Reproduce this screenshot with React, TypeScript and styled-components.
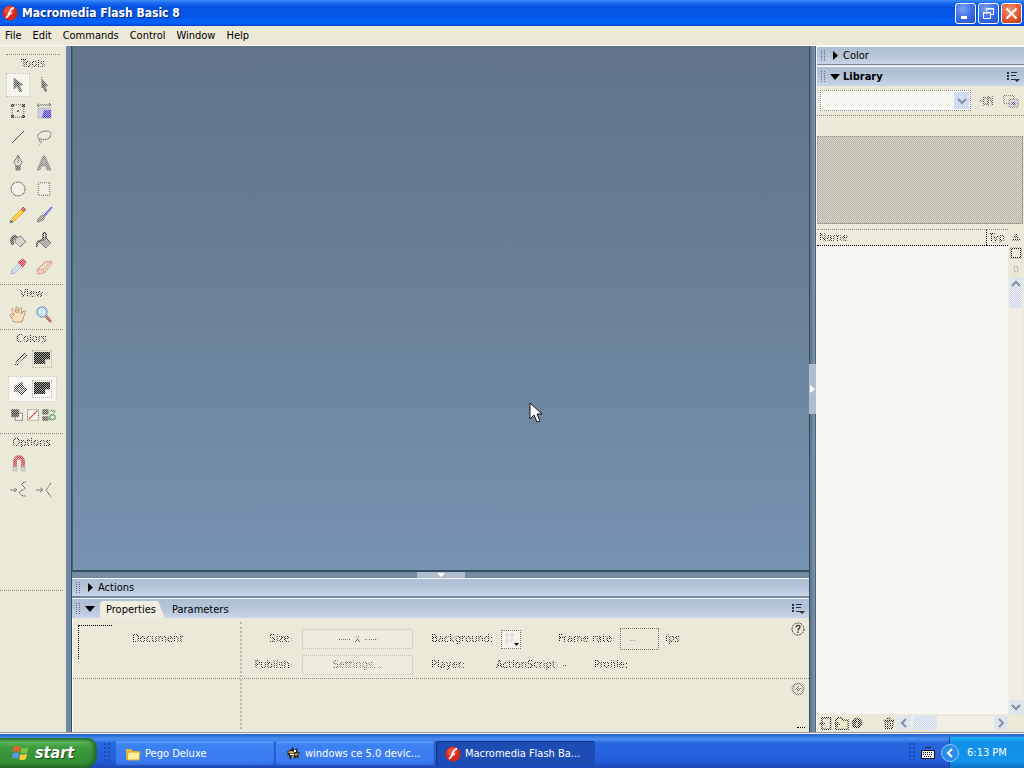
import React from "react";
import styled, { createGlobalStyle, css } from "styled-components";

const checkerMask = css`
  mask-image: conic-gradient(#000 25%, transparent 0 50%, #000 0 75%, transparent 0);
  mask-size: 2px 2px;
`;

const softMask = css`
  mask-image: conic-gradient(#000 25%, rgb(0 0 0 / 40%) 0 50%, #000 0 75%, rgb(0 0 0 / 40%) 0);
  mask-size: 2px 2px;
`;

const checker = (a: string, b: string) =>
  `conic-gradient(${a} 25%, ${b} 0 50%, ${a} 0 75%, ${b} 0) 0 0 / 2px 2px`;

const GlobalStyle = createGlobalStyle`
  * { box-sizing: border-box; }
  body {
    margin: 0;
    background: #ebe9d8;
    color: #000;
    font: 11px/14px "DejaVu Sans Condensed", "Open Sans", sans-serif;
  }
  button, input, select {
    font: inherit;
    color: inherit;
    margin: 0;
    padding: 0;
    border: 0;
    background: none;
    border-radius: 0;
    opacity: 1;
  }
  svg { display: block; flex: none; }
`;

const Desktop = styled.div`
  display: flex;
  flex-direction: column;
  height: 100vh;
  min-height: 640px;
  overflow: hidden;
`;

/* ---------- title and menu ---------- */

const TitleBar = styled.header`
  display: flex;
  align-items: center;
  gap: 4px;
  flex: none;
  height: 26px;
  padding: 0 2px;
  background: linear-gradient(#3c8cf8 0, #1a6af0 3px, #0553e0 7px, #0556e8 16px, #0264fe 22px, #0458ea 24px, #0440c0 26px);
`;

const WindowTitle = styled.h1`
  flex: 1;
  margin: 0;
  color: #fff;
  font: bold 12px/16px "DejaVu Sans Condensed", sans-serif;
  text-shadow: 1px 1px 1px #0a2a80;
`;

const CaptionButton = styled.button<{ $close?: boolean }>`
  display: grid;
  place-items: center;
  width: 21px;
  height: 21px;
  margin-left: -2px;
  border: 1px solid #fff;
  border-radius: 3px;
  background: ${(p) =>
    p.$close
      ? "radial-gradient(circle at 40% 30%, #f09478, #e25530 60%, #b93614)"
      : "radial-gradient(circle at 35% 25%, #7ba2f4, #3a6ae8 55%, #2350c8)"};
`;

const MenuBar = styled.nav`
  display: flex;
  align-items: center;
  gap: 11px;
  flex: none;
  height: 20px;
  padding: 0 5px;
  border-bottom: 1px solid #fbfaf4;
  background: #ede9d9;
`;

const MenuItem = styled.button`
  line-height: 16px;
`;

/* ---------- workspace ---------- */

const Workspace = styled.div`
  display: flex;
  flex: 1;
  min-height: 0;
  background: #7189a3;
  border-bottom: 1px solid #9c9a98;
`;

const Toolbox = styled.aside`
  width: 66px;
  flex: none;
  padding: 8px 3px 0 0;
  background: #ebe9d8;
`;

const ToolSection = styled.section<{ $height: number; $inset?: boolean }>`
  height: ${(p) => p.$height}px;
  ${(p) => p.$inset && "margin: 0 3px 0 6px;"}
  border-top: 1px dotted #8c8b80;
`;

const Dithered = styled.span`
  ${checkerMask}
`;

const SectionTitle = styled.h2`
  margin: 0;
  padding-top: 1px;
  font: inherit;
  line-height: 16px;
  text-align: center;
  ${checkerMask}
`;

const ToolGrid = styled.div<{ $inset?: boolean }>`
  display: grid;
  grid-template-columns: 26px 26px;
  grid-auto-rows: 26px;
  margin-left: ${(p) => (p.$inset ? "-1px" : "5px")};
`;

const ToolButton = styled.button<{ $on?: boolean }>`
  display: grid;
  place-items: center;
  width: 24px;
  height: 24px;
  margin: 1px;
  ${(p) => p.$on && "background: #f6f5ee; border: 1px dotted #c4c2b8;"}
  svg { ${softMask} }
`;

const SwatchButton = styled.button<{ $on?: boolean }>`
  display: flex;
  align-items: center;
  gap: 2px;
  width: 47px;
  height: 24px;
  margin: 0 0 6px 9px;
  padding-left: 3px;
  ${(p) => p.$on && "background: #f8f7f1; outline: 1px dotted #d4d2c8;"}
`;

const Swatch = styled.span`
  display: block;
  width: 20px;
  height: 18px;
  border: 1px dotted #b5b3a8;
  padding: 1px;
  i {
    display: block;
    height: 12px;
    background: ${checker("#111", "#a8a69b")};
    clip-path: polygon(0 0, 100% 0, 100% 60%, 70% 60%, 70% 100%, 0 100%);
  }
`;

const SmallTools = styled.div`
  display: flex;
  margin-left: 9px;
  svg { ${softMask} }
`;

const Center = styled.div`
  display: flex;
  flex-direction: column;
  flex: 1;
  min-width: 0;
  margin-left: 5px;
  border-left: 1px solid #344d60;
`;

const Stage = styled.main`
  position: relative;
  flex: 1;
  min-height: 0;
  border-left: 1px solid #4c6379;
  border-bottom: 2px solid #344d60;
  background: linear-gradient(#61748a, #6a8097 45%, #7693b0);
`;

const Cursor = styled.svg`
  position: absolute;
  left: 62%;
  top: 68%;
`;

const Gutter = styled.div<{ $vertical?: boolean }>`
  display: flex;
  align-items: center;
  justify-content: center;
  flex: none;
  ${(p) =>
    p.$vertical
      ? "width: 7px; border-left: 1px solid #344d60; border-right: 1px solid #4d6378;"
      : "height: 6px;"}
  background: ${(p) => (p.$vertical ? "linear-gradient(90deg, #5c7389, #7d95ae)" : "#748ba2")};
`;

const Handle = styled.button<{ $vertical?: boolean }>`
  display: grid;
  place-items: center;
  flex: none;
  width: ${(p) => (p.$vertical ? 7 : 48)}px;
  height: ${(p) => (p.$vertical ? 50 : 6)}px;
  background: #b0bdcf;
`;

const PanelHeader = styled.header<{ $bold?: boolean }>`
  display: flex;
  align-items: center;
  flex: none;
  height: 19px;
  padding: 0 4px 0 4px;
  border-top: 1px solid #f4f7fb;
  border-bottom: 1px solid #7487a0;
  background: linear-gradient(#adbfd3, #b6c5d9 50%, #c9d5ea);
  font-weight: ${(p) => (p.$bold ? "bold" : "normal")};
`;

const Grip = styled.span`
  width: 4px;
  height: 11px;
  margin-right: 5px;
  background: conic-gradient(at 1px 1px, transparent 75%, #5d6c82 0) 0 0 / 3px 2px;
`;

const PanelTitle = styled.button`
  display: flex;
  align-items: center;
  gap: 3px;
  font-weight: inherit;
`;

const Spacer = styled.span`
  flex: 1;
`;

const TabHeader = styled(PanelHeader)`
  height: 20px;
  margin-top: 1px;
  border-bottom: 0;
`;

const Tab = styled.button<{ $active?: boolean }>`
  align-self: flex-end;
  height: 17px;
  margin-left: 5px;
  padding: 1px ${(p) => (p.$active ? 9 : 2)}px 0 ${(p) => (p.$active ? 6 : 2)}px;
  ${(p) =>
    p.$active &&
    "background: #efeddf; border-radius: 4px 0 0 0; clip-path: polygon(0 0, calc(100% - 7px) 0, 100% 100%, 0 100%);"}
`;

const Inspector = styled.section`
  display: flex;
  flex: none;
  height: 114px;
  background: #ebe9d8;
  border-left: 1px solid #fff;
`;

const DocumentCell = styled.div`
  width: 169px;
  flex: none;
  margin-top: 4px;
  margin-bottom: 3px;
  border-right: 2px dotted #bab8ad;
`;

const CellTop = styled.div`
  display: flex;
  height: 57px;
  padding: 3px 0 0 5px;
  border-bottom: 1px dotted #8b897f;
`;

const Preview = styled.div`
  width: 34px;
  height: 34px;
  margin-right: 20px;
  border-top: 1px dotted #000;
  border-left: 1px dotted #000;
`;

const DocumentName = styled.span`
  padding-top: 7px;
  ${checkerMask}
`;

const FormCell = styled.div`
  display: flex;
  flex-direction: column;
  flex: 1;
`;

const FormTop = styled.div`
  display: flex;
  height: 61px;
  border-bottom: 1px dotted #8b897f;
`;

const FormRows = styled.form`
  display: flex;
  flex-direction: column;
  flex: 1;
  padding-top: 9px;
  gap: 2px;
`;

const FormRow = styled.div`
  display: flex;
  align-items: center;
  height: 24px;
`;

const Label = styled.label<{ $width?: number; $right?: boolean }>`
  ${(p) => p.$width && `width: ${p.$width}px;`}
  ${(p) => p.$right && "text-align: right;"}
  flex: none;
  white-space: nowrap;
  ${checkerMask}
`;

const FormButton = styled.button`
  width: 111px;
  height: 20px;
  margin: 0 18px 0 9px;
  border: 1px dotted #bdbbaf;
  border-radius: 2px;
  background: ${checker("#f1efe2", "#ebe9d8")};
  color: #55544c;
`;

const ColorWell = styled.button`
  width: 20px;
  height: 19px;
  margin-right: 37px;
  border: 1px dotted #77756b;
  background: #f5f4ec;
`;

const RateInput = styled.input`
  width: 39px;
  height: 22px;
  margin-right: 6px;
  padding-left: 8px;
  border: 1px dotted #77756b;
  color: #bbb;
`;

const SideIcons = styled.div`
  display: flex;
  flex-direction: column;
  align-items: flex-end;
  padding: 4px 4px 0 0;
`;

const FormBottom = styled.div`
  display: flex;
  flex: 1;
  flex-direction: column;
  align-items: flex-end;
  justify-content: space-between;
  padding: 3px 4px 4px;
`;

const Dots = styled.span`
  width: 8px;
  border-top: 1px dotted #000;
`;

/* ---------- library ---------- */

const RightDock = styled.aside`
  display: flex;
  flex-direction: column;
  width: 208px;
  flex: none;
  border-left: 1px solid #f4f6f8;
  background: #ebe9d8;
`;

const LibraryBar = styled.div`
  display: flex;
  align-items: center;
  flex: none;
  gap: 5px;
  height: 30px;
  padding: 0 3px 0 3px;
  border-bottom: 1px dotted #8b897f;
`;

const LibrarySelect = styled.div`
  flex: 1;
  display: flex;
  height: 21px;
  border: 1px dotted #8b897f;
  background: ${checker("#fff", "#f2f1e8")};
  select {
    flex: 1;
    appearance: none;
  }
  span {
    display: grid;
    place-items: center;
    width: 15px;
    margin: 1px;
    background: ${checker("#c6d4f4", "#dde3f2")};
  }
`;

const IconButton = styled.button`
  display: grid;
  place-items: center;
  width: 20px;
  height: 20px;
  svg { ${checkerMask} }
`;

const LibraryPreview = styled.div`
  flex: none;
  height: 88px;
  margin: 20px 1px 5px 0;
  border: 1px dotted #8b897f;
  background: ${checker("#b9b8ad", "#d6d4c6")};
`;

const ListArea = styled.div`
  display: flex;
  flex: 1;
  min-height: 0;
  padding-right: 1px;
`;

const ListBody = styled.div`
  flex: 1;
  background: ${checker("#fff", "#f1f0e4")};
`;

const ListTable = styled.table`
  width: 100%;
  border-collapse: collapse;
  table-layout: fixed;
  background: #eeecdd;
  th {
    height: 16px;
    padding: 0 2px;
    border-top: 1px dotted #8b897f;
    border-bottom: 1px dotted #000;
    font-weight: normal;
    line-height: 14px;
    text-align: left;
    white-space: nowrap;
  }
  th + th {
    width: 22px;
    border-left: 1px dotted #000;
  }
`;

const ListRail = styled.div`
  display: flex;
  flex-direction: column;
  align-items: center;
  width: 15px;
  flex: none;
  background: ${checker("#f5f4ec", "#ebe9dc")};
`;

const RailIcon = styled.button<{ $height: number }>`
  display: grid;
  place-items: center;
  width: 15px;
  height: ${(p) => p.$height}px;
  background: #ebe9d8;
  svg { ${checkerMask} }
`;

const ScrollButton = styled.button`
  display: grid;
  place-items: center;
  flex: none;
  width: 14px;
  height: 14px;
  background: ${checker("#d0dbf0", "#eceded")};
`;

const Thumb = styled.span<{ $w: number; $h: number }>`
  width: ${(p) => p.$w}px;
  height: ${(p) => p.$h}px;
  background: ${checker("#ccd7f4", "#ecedf2")};
`;

const LibraryFooter = styled.footer`
  display: flex;
  align-items: center;
  flex: none;
  height: 18px;
  padding-right: 16px;
`;

const FooterButton = styled.button`
  display: grid;
  place-items: center;
  width: 16px;
  height: 16px;
  svg { ${checkerMask} }
`;

const HScroll = styled.div`
  display: flex;
  flex: 1;
  align-items: center;
  gap: 2px;
  background: ${checker("#f8f7f1", "#ebe9dc")};
`;

/* ---------- taskbar ---------- */

const Taskbar = styled.footer`
  display: flex;
  align-items: stretch;
  flex: none;
  height: 35px;
  padding-top: 4px;
  border-top: 1px solid #f2f4fa;
  background: linear-gradient(#2360cc 0, #4a90f0 5px, #2866e0 9px, #245edc 26px, #1c48b8 34px);
  color: #fff;
`;

const StartButton = styled.button`
  display: flex;
  align-items: center;
  gap: 5px;
  width: 97px;
  padding: 0 0 0 12px;
  border-radius: 0 10px 12px 0;
  background: linear-gradient(#2f7d30, #58b458 4px, #3c9a3c 10px, #368f36 24px, #246e26);
  box-shadow: inset -3px 0 4px #1f6423;
  font: italic bold 16px/24px "DejaVu Sans Condensed", sans-serif;
  text-shadow: 1px 1px 1px #1a4a1c;
`;

const TaskGrip = styled.span`
  width: 6px;
  height: 20px;
  margin: 5px 6px 0 7px;
  background: conic-gradient(at 2px 2px, transparent 75%, #1c4ab4 0) 0 0 / 4px 4px;
`;

const Task = styled.button<{ $active?: boolean }>`
  display: flex;
  align-items: center;
  gap: 4px;
  width: 159px;
  height: 25px;
  margin: 3px 1px 0 0;
  padding-left: 9px;
  border-radius: 2px;
  white-space: nowrap;
  background: ${(p) =>
    p.$active ? "#1c4cb4" : "linear-gradient(#5c9cff, #3c81f3 4px, #3a7cf0 20px, #2f68d8)"};
  box-shadow: ${(p) => (p.$active ? "inset 1px 1px 1px #10347c" : "inset -1px -1px 1px #2355c0")};
`;

const Tray = styled.div`
  display: flex;
  align-items: center;
  width: 75px;
  margin-top: -1px;
  border-left: 1px solid #123c98;
  background: linear-gradient(#18b0f4, #1290e8 6px, #1194ec 24px, #0f70c8);
`;

const TrayToggle = styled.button`
  width: 18px;
  height: 18px;
  margin-left: -9px;
  margin-right: 8px;
`;

/* ---------- drawings ---------- */

const Icon = ({ size = 18, children }: { size?: number; children: React.ReactNode }) => (
  <svg width={size} height={size} viewBox="0 0 18 18" fill="none" stroke="#555" aria-hidden="true">
    {children}
  </svg>
);

const FlashLogo = () => (
  <svg width="16" height="16" viewBox="0 0 16 16" aria-hidden="true">
    <circle cx="8" cy="8" r="7.6" fill="#d8281c" />
    <circle cx="7" cy="6" r="4.6" fill="#f06a50" opacity=".6" />
    <path d="M12 3c-3 0-3.600 2-4.300 4.200C7 9.800 6 12 3.800 12.600M6 8.300h4" fill="none" stroke="#fff" strokeWidth="1.800" />
  </svg>
);

const Arrow = ({ down }: { down?: boolean }) => (
  <svg width="10" height="10" viewBox="0 0 10 10" aria-hidden="true">
    <path d={down ? "M0 2h10L5 8z" : "M3 0v9l5-4.500z"} />
  </svg>
);

const OptionsIcon = () => (
  <svg width="13" height="12" viewBox="0 0 13 12" fill="#26313f" aria-hidden="true">
    <path d="M0 1h2v2H0zM0 4h2v2H0zM0 7h2v2H0zM4 1h6v1H4zM4 4h5v1H4zM4 8h5v1H4zM7 8h6l-3 3z" />
  </svg>
);

const Chevron = ({ turn = 0 }: { turn?: number }) => (
  <svg width="10" height="10" viewBox="0 0 10 10" fill="none" stroke="#8290a4" strokeWidth="2" aria-hidden="true">
    <path d="M1 3l4 4 4-4" transform={`rotate(${turn} 5 5)`} />
  </svg>
);

const tools: [string, React.ReactNode][] = [
  ["Selection", <path d="M5 2v11l3-3 3 6 2-1-3-6h4z" fill="#555" stroke="#777" />],
  ["Subselection", <><path d="M7 1v11" strokeDasharray="1 1" stroke="#222" /><path d="M7 3l6 7H10l2 5-2 1-2-5-1 1z" fill="#555" stroke="#777" strokeWidth=".5" /></>],
  ["Free transform", <><path d="M3 3h12v12H3z" strokeDasharray="1 1" stroke="#222" /><path d="M2 2h3v3H2zM13 2h3v3h-3zM2 13h3v3H2zM13 13h3v3h-3zM8 8h2v2H8z" fill="#333" stroke="none" /></>],
  ["Fill transform", <><path d="M3 6h13v10H3z" fill="#c4bfe8" stroke="#aaa" /><path d="M9 8h7v8H7z" fill="#5040e0" stroke="none" /><path d="M2 3h14M4 1L2 3l2 2M14 1l2 2-2 2" /></>],
  ["Line", <path d="M3 15L15 3" />],
  ["Lasso", <path d="M5 11C1 10 2 5 8 3.500S17 4 15.500 8 9 12 5 11zm0 0c-2 1-1 3 1 2s0 3-2 4" />],
  ["Pen", <><path d="M9 1l4 7-2 4H7L5 8z" fill="#ddd" /><path d="M9 2v7M7 12h4v4H7z" fill="#666" /></>],
  ["Text", <path d="M2 16L8 2h2l6 14h-4l-1.500-4h-4L5 16zM7.500 9h3L9 5z" fill="#888" stroke="#777" strokeWidth=".7" />],
  ["Oval", <circle cx="9" cy="9" r="7" fill="#f6f5ee" />],
  ["Rectangle", <path d="M3 3h12v12H3z" fill="#f3f2ea" strokeDasharray="1 1" stroke="#333" />],
  ["Pencil", <><path d="M2 16l2-5 8-8 3 3-8 8z" fill="#ffc400" stroke="#c89820" /><path d="M12 3l2-2 3 3-2 2z" fill="#d85050" stroke="#b04848" /><path d="M1 17l1-3 2 2z" fill="#333" stroke="#555" /></>],
  ["Brush", <><path d="M17 1l-8 9" stroke="#4848f0" strokeWidth="2" /><path d="M2 16c1-4 3-6 6-7l2 2c-1 3-4 5-8 5z" fill="#888" stroke="#777" /></>],
  ["Ink bottle", <><path d="M7 6l5-2 5 6-6 5-5-5z" fill="#ccc" /><path d="M3 13C0 8 2 4 6 3l2 2c-3 1-4 3-3 7z" fill="#555" /></>],
  ["Paint bucket", <><path d="M4 10l6-5 6 6-5 5z" fill="#999" /><path d="M2 15c-1-4 1-6 4-7M8 9V3c0-3 3-3 3 0v4" stroke="#333" strokeWidth="1.500" /></>],
  ["Eyedropper", <><path d="M2 16l1-4 7-7 3 3-7 7z" fill="#c8dcf8" stroke="#8a9cb8" /><path d="M9 4l2-1 3-2 3 3-2 3-1 2z" fill="#f03858" stroke="#b03048" /></>],
  ["Eraser", <path d="M2 12l8-8 6-1 1 3-8 9-6 1zM2 12l6-1 9-8M8 11l1 4" fill="#ffc4b0" stroke="#c08a80" />],
];

const ToolItem = ({ name, art, on }: { name: string; art: React.ReactNode; on?: boolean }) => (
  <ToolButton $on={on} aria-label={name}>
    <Icon>{art}</Icon>
  </ToolButton>
);

const Tools = () => (
  <Toolbox>
    <ToolSection $height={230} $inset>
      <SectionTitle>Tools</SectionTitle>
      <ToolGrid $inset>
        {tools.map(([name, art], i) => (
          <ToolItem key={name} name={name} art={art} on={i === 0} />
        ))}
      </ToolGrid>
    </ToolSection>
    <ToolSection $height={45}>
      <SectionTitle>View</SectionTitle>
      <ToolGrid>
        <ToolItem name="Hand" art={<path d="M5 16L1 9c0-2 2-1 4 1L3 4c0-2 2-2 3 0l1 3V2c0-2 2-2 2 0v5l2-5c1-1 2 0 2 1l-1 5 3-3c1-1 2 0 1 2l-3 9z" fill="#ffd8b4" stroke="#a87858" />} />
        <ToolItem name="Zoom" art={<><circle cx="7" cy="6" r="5" fill="#c4e6ff" stroke="#6088c8" strokeWidth="1.500" /><path d="M11 10l5 6" stroke="#a85048" strokeWidth="3" /></>} />
      </ToolGrid>
    </ToolSection>
    <ToolSection $height={104}>
      <SectionTitle>Colors</SectionTitle>
      <SwatchButton aria-label="Stroke color">
        <Dithered><Icon><path d="M3 15l2-4 8-8 2 2-8 9z" fill="#ccc" stroke="#222" /></Icon></Dithered>
        <Swatch><i /></Swatch>
      </SwatchButton>
      <SwatchButton $on aria-label="Fill color">
        <Dithered><Icon><path d="M5 8l4-3 5 5-4 4-5-3zM3 12c-1-4 1-6 4-7l3-2v6" fill="#777" stroke="#222" strokeWidth="1.500" /></Icon></Dithered>
        <Swatch><i /></Swatch>
      </SwatchButton>
      <SmallTools>
        <button aria-label="Black and white"><Icon size={16}><path d="M7 7h8v8H7z" fill="#fff" /><path d="M3 3h8v8H3z" fill="#444" /></Icon></button>
        <button aria-label="No color"><Icon size={16}><path d="M3 3h12v12H3z" fill="#fff" strokeDasharray="1 1" stroke="#222" /><path d="M4 14L14 4" stroke="#d85050" strokeWidth="2" /></Icon></button>
        <button aria-label="Swap colors"><Icon size={16}><path d="M2 3h6v5H2zM2 11h6v4H2z" fill="#666" /><path d="M10 4h5v3M15 14h-5v-4c4-3 8 0 5 4" stroke="#60a070" strokeWidth="2" /></Icon></button>
      </SmallTools>
    </ToolSection>
    <ToolSection $height={157}>
      <SectionTitle>Options</SectionTitle>
      <ToolGrid>
        <ToolItem name="Snap to objects" art={<><path d="M6 12V6c0-5 8-5 8 0v6" stroke="#c84858" strokeWidth="4" /><path d="M4 12h4v4H4zM12 12h4v4h-4z" fill="#ccc" stroke="#aaa" /></>} />
        <span />
        <ToolItem name="Smooth" art={<path d="M1 9h6M5 7l3 2-3 2M17 1c-4 0-5 3-3 4s3 3 0 4-5 2-3 4 4 2 6 2" />} />
        <ToolItem name="Straighten" art={<path d="M1 9h6M5 7l3 2-3 2M16 2l-5 7 5 7" />} />
      </ToolGrid>
    </ToolSection>
    <ToolSection $height={20} />
  </Toolbox>
);

const Properties = () => (
  <Inspector>
    <DocumentCell>
      <CellTop>
        <Preview />
        <DocumentName>Document</DocumentName>
      </CellTop>
    </DocumentCell>
    <FormCell>
      <FormTop>
        <FormRows>
          <FormRow>
            <Label as="span" $width={51} $right>Size:</Label>
            <FormButton type="button"><Dithered>---- x ----</Dithered></FormButton>
            <Label htmlFor="background" $width={70}>Background:</Label>
            <ColorWell id="background" type="button">
              <svg width="18" height="17" viewBox="0 0 18 17" aria-hidden="true">
                <path d="M3 4h10M3 10h8M5 2v12M10 2v9" stroke="#bbb9af" strokeDasharray="1 1" />
                <path d="M12 12h5l-2.500 3z" />
              </svg>
            </ColorWell>
            <Label htmlFor="rate" $width={62}>Frame rate:</Label>
            <RateInput id="rate" defaultValue="--" />
            <Label as="span">fps</Label>
          </FormRow>
          <FormRow>
            <Label as="span" $width={51} $right>Publish:</Label>
            <FormButton type="button"><Dithered>Settings...</Dithered></FormButton>
            <Label as="span" $width={65}>Player:</Label>
            <Label as="span" $width={67}>ActionScript:</Label>
            <Label as="span" $width={31}>-</Label>
            <Label as="span">Profile:</Label>
          </FormRow>
        </FormRows>
        <SideIcons>
          <button aria-label="Help">
            <svg width="14" height="14" viewBox="0 0 14 14" fill="none" stroke="#333" aria-hidden="true">
              <circle cx="7" cy="7" r="6" strokeDasharray="2 1" />
              <path d="M5 5.500c0-3 4-2.500 4-.5 0 1.500-2 1.500-2 3.500M7 9.500v1.500" strokeWidth="1.300" />
            </svg>
          </button>
        </SideIcons>
      </FormTop>
      <FormBottom>
        <Dithered>
          <svg width="14" height="14" viewBox="0 0 14 14" fill="none" stroke="#77756b" aria-hidden="true">
            <circle cx="7" cy="7" r="5.500" strokeWidth="2" />
            <path d="M4 7h6M7 4v6" strokeWidth="2" />
          </svg>
        </Dithered>
        <Dots />
      </FormBottom>
    </FormCell>
  </Inspector>
);

const Library = () => (
  <RightDock>
    <PanelHeader>
      <Grip />
      <PanelTitle><Arrow />Color</PanelTitle>
    </PanelHeader>
    <TabHeader $bold>
      <Grip />
      <PanelTitle><Arrow down />Library</PanelTitle>
      <Spacer />
      <OptionsIcon />
    </TabHeader>
    <LibraryBar>
      <LibrarySelect>
        <select aria-label="Library document" />
        <span><Chevron /></span>
      </LibrarySelect>
      <IconButton aria-label="Pin current library">
        <Icon size={14}><path d="M0 9h6M6 3v12M6 5h5v8H6M12 2v14M13 4l5 10M17 3v12" strokeWidth="1.500" /></Icon>
      </IconButton>
      <IconButton aria-label="New library panel">
        <Icon size={16}><path d="M1 3h11v9H1z" /><path d="M7 7h10v9H7z" fill="#ccc" /><path d="M9 12h6M12 9v5" stroke="#4430a0" strokeWidth="2" /></Icon>
      </IconButton>
    </LibraryBar>
    <LibraryPreview />
    <ListArea>
      <ListBody>
        <ListTable>
          <thead>
            <tr>
              <th><Dithered>Name</Dithered></th>
              <th><Dithered>Typ</Dithered></th>
            </tr>
          </thead>
        </ListTable>
      </ListBody>
      <ListRail>
        <RailIcon $height={16} aria-label="Sort order"><Icon size={10}><path d="M7 5h4M5 9h8M2 14h14" stroke="#222" strokeWidth="3" /></Icon></RailIcon>
        <RailIcon $height={16} aria-label="Wide view"><Icon size={12}><path d="M2 2h14v14H2z" stroke="#111" strokeWidth="2" /></Icon></RailIcon>
        <RailIcon $height={16} aria-label="Narrow view"><Icon size={10}><path d="M6 4h6v10H6z" stroke="#999" strokeWidth="2" /></Icon></RailIcon>
        <ScrollButton aria-label="Scroll up"><Chevron turn={180} /></ScrollButton>
        <Thumb $w={13} $h={17} />
        <Spacer />
        <ScrollButton aria-label="Scroll down"><Chevron /></ScrollButton>
      </ListRail>
    </ListArea>
    <LibraryFooter>
      <FooterButton aria-label="New symbol"><Icon size={13}><path d="M4 1h12v16H4zM0 9h8M4 5v8" stroke="#222" strokeWidth="2" /></Icon></FooterButton>
      <FooterButton aria-label="New folder"><Icon size={15}><path d="M2 5l3-3h4l2 3h6v11H2zM0 10h7M4 7v7" fill="#efe8b8" stroke="#222" strokeWidth="1.500" /></Icon></FooterButton>
      <FooterButton aria-label="Item properties"><Icon size={12}><circle cx="9" cy="9" r="7" fill="#333" stroke="#222" strokeWidth="2" /><path d="M9 8v6M9 4v2" stroke="#fff" strokeWidth="2" /></Icon></FooterButton>
      <FooterButton aria-hidden="true" tabIndex={-1} />
      <FooterButton aria-label="Delete"><Icon size={12}><path d="M3 6h12l-1 11H4zM1 5h16M6 2h6M7 8v7M11 8v7" stroke="#222" strokeWidth="2" /></Icon></FooterButton>
      <HScroll>
        <ScrollButton aria-label="Scroll left"><Chevron turn={90} /></ScrollButton>
        <Thumb $w={24} $h={14} />
        <Spacer />
        <ScrollButton aria-label="Scroll right"><Chevron turn={270} /></ScrollButton>
      </HScroll>
    </LibraryFooter>
  </RightDock>
);

const App = () => (
  <>
    <GlobalStyle />
    <Desktop>
      <TitleBar>
        <FlashLogo />
        <WindowTitle>Macromedia Flash Basic 8</WindowTitle>
        <CaptionButton aria-label="Minimize">
          <svg width="13" height="13" viewBox="0 0 13 13"><path d="M2 9h6v3H2z" fill="#fff" /></svg>
        </CaptionButton>
        <CaptionButton aria-label="Restore">
          <svg width="13" height="13" viewBox="0 0 13 13" fill="none" stroke="#fff"><path d="M4.500 4V1.500h7v6H9M4 2h8M1.500 5.500h7v6h-7zM1 6h8" /></svg>
        </CaptionButton>
        <CaptionButton $close aria-label="Close">
          <svg width="13" height="13" viewBox="0 0 13 13" stroke="#fff" strokeWidth="2"><path d="M1.500 1.500l10 10M11.500 1.500l-10 10" /></svg>
        </CaptionButton>
      </TitleBar>
      <MenuBar>
        {["File", "Edit", "Commands", "Control", "Window", "Help"].map((m) => (
          <MenuItem key={m}>{m}</MenuItem>
        ))}
      </MenuBar>
      <Workspace>
        <Tools />
        <Center>
          <Stage>
            <Cursor width="14" height="22" viewBox="0 0 14 22" aria-hidden="true">
              <path d="M1 1v16l4-4 3 7 3-1-3-7h5z" fill="#fff" stroke="#111" />
            </Cursor>
          </Stage>
          <Gutter>
            <Handle aria-label="Collapse bottom panels">
              <svg width="8" height="5" viewBox="0 0 8 5"><path d="M0 0h8L4 4z" fill="#fff" /></svg>
            </Handle>
          </Gutter>
          <PanelHeader>
            <Grip />
            <PanelTitle><Arrow />Actions</PanelTitle>
          </PanelHeader>
          <TabHeader>
            <Grip />
            <PanelTitle aria-label="Collapse properties"><Arrow down /></PanelTitle>
            <Tab $active>Properties</Tab>
            <Tab>Parameters</Tab>
            <Spacer />
            <OptionsIcon />
          </TabHeader>
          <Properties />
        </Center>
        <Gutter $vertical>
          <Handle $vertical aria-label="Collapse side panels">
            <svg width="5" height="8" viewBox="0 0 5 8"><path d="M0 0v8l5-4z" fill="#fff" /></svg>
          </Handle>
        </Gutter>
        <Library />
      </Workspace>
      <Taskbar>
        <StartButton>
          <svg width="18" height="18" viewBox="0 0 18 18" aria-hidden="true">
            <path d="M2 3c2-1.500 4-1.500 6.500 0L7.500 8.500C5 7 3 7 1 8z" fill="#f0602c" />
            <path d="M9.500 3.500c2 1 4.500 1 7-.5l-1.200 5.500c-2.300 1.300-4.300 1.300-6.600.3z" fill="#7cc844" />
            <path d="M.8 9.500c2-1.300 4-1.200 6.400.2L6 15c-2.300-1.500-4.300-1.400-6.200-.2z" fill="#5c92f0" />
            <path d="M8.300 10c2.200 1 4.400 1 6.700-.3L14 15c-2.300 1.500-4.500 1.400-6.800.2z" fill="#f8cc38" />
          </svg>
          start
        </StartButton>
        <TaskGrip />
        <Task>
          <svg width="16" height="14" viewBox="0 0 16 14" aria-hidden="true">
            <path d="M1 2h5l2 2h6v8H1z" fill="#e8b838" />
            <path d="M3 5h12l-1 8H2z" fill="#fff0a0" stroke="#d8a830" />
          </svg>
          Pego Deluxe
        </Task>
        <Task>
          <svg width="16" height="16" viewBox="0 0 16 16" aria-hidden="true">
            <path d="M1 6l4-2 3-3 1 3 4-2-1 3 3 2-2 2 1 4-3-2-1 2-2-3-3 4-1-5-2 1 1-3z" fill="#2a2418" />
            <path d="M2 6l4-1 4 1-3 2zM9 8l5-1-3 3zM6 10l3-1-1 3z" fill="#d8a860" />
            <path d="M5 8h4v1H5zM9 4h2v2H9z" fill="#fff" />
          </svg>
          windows ce 5.0 devic...
        </Task>
        <Task $active>
          <FlashLogo />
          Macromedia Flash Ba...
        </Task>
        <Spacer />
        <TaskGrip />
        <svg width="28" height="30" viewBox="0 0 28 30" aria-hidden="true">
          <path d="M4 10c3-2 3 1 6-1" stroke="#111" fill="none" />
          <path d="M0 12h14v9H0z" fill="#111" />
          <path d="M1 13h12v7H1z" fill="#eee" />
          <path d="M2 14.500h10M2 16.500h10M3 18.500h8" stroke="#111" strokeDasharray="1 1" />
        </svg>
        <Tray>
          <TrayToggle aria-label="Show hidden icons">
            <svg width="18" height="18" viewBox="0 0 18 18">
              <circle cx="9" cy="9" r="8.500" fill="#2a8ce8" stroke="#8cc8f8" />
              <path d="M11 5L7 9l4 4" fill="none" stroke="#fff" strokeWidth="2" />
            </svg>
          </TrayToggle>
          <time>6:13 PM</time>
        </Tray>
      </Taskbar>
    </Desktop>
  </>
);

export default App;
